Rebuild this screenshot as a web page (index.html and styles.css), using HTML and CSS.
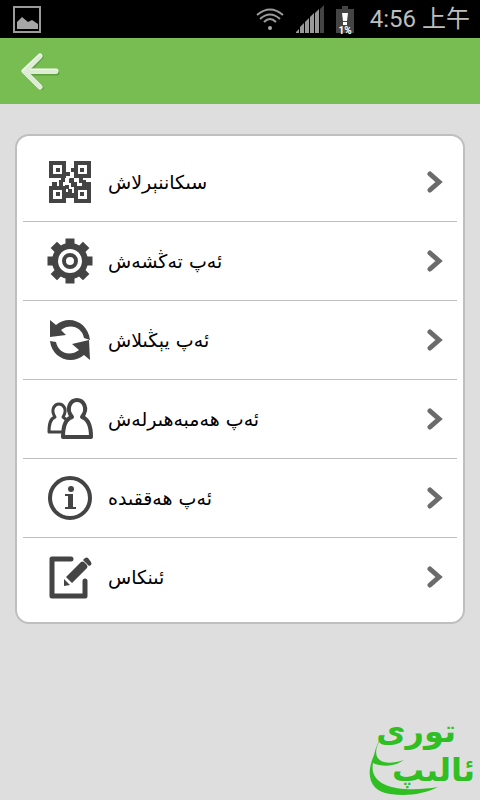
FILE: index.html
```html
<!DOCTYPE html>
<html lang="ug">
<head>
    <meta charset="UTF-8">
    <meta name="viewport" content="width=device-width, initial-scale=1.0">
    <title>ئالىپ تورى</title>
    <link rel="stylesheet" href="styles.css">
</head>
<body>
    <div class="status-bar">
        <svg class="picture" width="28" height="27" viewBox="0 0 28 27">
            <rect x="1" y="1" width="26" height="25" fill="none" stroke="#9b9b9b" stroke-width="2"/>
            <path d="M4 23v-7l5-5 6 5 4-2 6 4v5z" fill="#a6a6a6"/>
        </svg>
        <div class="status-icons">
            <svg width="28" height="23" viewBox="0 0 28 23" fill="none" stroke="#9b9b9b" stroke-width="2">
                <path d="M1 7Q14-4 27 7M4 11Q14 2 24 11M8 14Q14 8 20 14"/>
                <circle cx="14" cy="20" r="2" fill="#aaa" stroke="none"/>
            </svg>
            <svg width="28" height="28" viewBox="0 0 28 28" fill="#999">
                <path d="M0 28v-1l3-3v4zM4 28v-6l4-4v10zM9 28V17l4-4v15zM14 28V12l4-4v20zM19 28V8l4-4v24z"/>
                <path d="M24 28V4l4-4v28z" fill="#444"/>
            </svg>
            <svg width="18" height="36" viewBox="0 0 18 36">
                <path d="M0 8h6V5h6v3h6v24H0z" fill="#444"/>
                <path d="M6 12h6l-1 8H7zM7 21h4v3H7z" fill="#fff"/>
                <text class="percent" x="9" y="33">1%</text>
            </svg>
            <span class="clock">4:56 上午</span>
        </div>
    </div>

    <header class="top-bar">
        <button class="back" type="button" aria-label="Back">
            <svg width="40" height="38" viewBox="0 0 40 38" fill="none" stroke-width="5" stroke-linecap="round" stroke-linejoin="round">
                <path d="M21 5L6 21l15 15M7 21h30" stroke="#4d8a32" opacity=".6"/>
                <path d="M20 4L4 19l16 16M5 19h31" stroke="#f2f9ee"/>
                <path d="M20 5L5 20l15 15M6 20h30" stroke="#dcedd3" stroke-width="4"/>
            </svg>
        </button>
    </header>

    <nav class="menu">
        <a class="item" href="#">
            <svg class="icon" viewBox="0 0 46 46" fill="#444">
                <path fill-rule="evenodd" d="M2 2h17v17H2zM6 6v9h9V6zM27 2h17v17H27zM31 6v9h9V6zM2 27h17v17H2zM6 31v9h9v-9zM27 27h17v17H27zM31 31v9h9v-9z"/>
                <path d="M9 9h4v4H9zM33 9h4v4h-4zM9 33h4v4H9zM33 33h4v4h-4zM24 9h4v4h-4zM19 13h4v4h-4zM14 18h4v5h-2v4h-4v-6h2zM5 23h5v5H5zM23 19h4v4h3v5h-6v-4h-2v-4zM32 19h4v2h3v2h5v5h-9v-4h-3zM18 26h4v4h-4zM21 30h4v4h4v5H19v-6h2z"/>
            </svg>
            <span class="label" dir="rtl">سىكاننېرلاش</span>
            <svg class="arrow" viewBox="0 0 16 22"><path d="M3 3l9 8-9 8"/></svg>
        </a>
        <a class="item" href="#">
            <svg class="icon" viewBox="0 0 46 46">
                <path d="M23 5v36M5 23h36M10 10l26 26M36 10L10 36" stroke="#444" stroke-width="9" stroke-linecap="square"/>
                <circle cx="23" cy="23" r="18" fill="#444"/>
                <circle cx="23" cy="23" r="12" fill="#fff"/>
                <circle cx="23" cy="23" r="6" fill="#fff" stroke="#444" stroke-width="4"/>
            </svg>
            <span class="label" dir="rtl">ئەپ تەڭشەش</span>
            <svg class="arrow" viewBox="0 0 16 22"><path d="M3 3l9 8-9 8"/></svg>
        </a>
        <a class="item" href="#">
            <svg class="icon" viewBox="0 0 46 46" fill="#444">
                <path d="M3 3l6 5C22-3 41 5 43 23l-6-2C35 10 23 6 14 13l5 5-16 2z"/>
                <path d="M43 43l-6-5C24 49 5 41 3 24l6 1c2 11 14 15 23 8l-7-6 17-4z"/>
            </svg>
            <span class="label" dir="rtl">ئەپ يېڭىلاش</span>
            <svg class="arrow" viewBox="0 0 16 22"><path d="M3 3l9 8-9 8"/></svg>
        </a>
        <a class="item" href="#">
            <svg class="icon" viewBox="0 0 46 46" fill="#fff" stroke="#444" stroke-width="4" stroke-linejoin="round">
                <path d="M8 21C3 13 8 8 12 8s9 5 4 13l5 4v11H2c0-8 1-13 6-15z" stroke-width="3"/>
                <path d="M25 21c-7-9-1-17 5-17s12 8 5 17c6 2 9 9 9 20H16c0-11 2-18 9-20z"/>
            </svg>
            <span class="label" dir="rtl">ئەپ ھەمبەھىرلەش</span>
            <svg class="arrow" viewBox="0 0 16 22"><path d="M3 3l9 8-9 8"/></svg>
        </a>
        <a class="item" href="#">
            <svg class="icon" viewBox="0 0 46 46" fill="#444">
                <circle cx="23" cy="23" r="20" fill="none" stroke="#444" stroke-width="4"/>
                <circle cx="24" cy="14" r="3"/>
                <path d="M18 19h8v13h3v2H18v-2h3V21h-3z"/>
            </svg>
            <span class="label" dir="rtl">ئەپ ھەققىدە</span>
            <svg class="arrow" viewBox="0 0 16 22"><path d="M3 3l9 8-9 8"/></svg>
        </a>
        <a class="item" href="#">
            <svg class="icon" viewBox="0 0 46 46" fill="#444">
                <path d="M24 5H5v37h33V27" fill="none" stroke="#444" stroke-width="5" stroke-linecap="round" stroke-linejoin="round"/>
                <path d="M17 25l6 6-6 1zM19 23L34 8q2-1 3 0l3 3q1 2 0 3L25 29zM36 6l2-2q2-1 3 0l3 4q1 2 0 3l-2 1z"/>
            </svg>
            <span class="label" dir="rtl">ئىنكاس</span>
            <svg class="arrow" viewBox="0 0 16 22"><path d="M3 3l9 8-9 8"/></svg>
        </a>
    </nav>

    <footer class="footer">
        <svg class="logo" viewBox="0 0 110 90" role="img" aria-label="ئالىپ تورى">
            <path class="swash" d="M17 22C-2 48 12 58 36 50C26 57 14 57 5 53C0 80 40 82 70 77C54 85 38 86 22 84C2 81-3 66 6 45Q9 31 17 22z"/>
            <text class="word" x="88" y="32">تورى</text>
            <text class="word" x="107" y="71">ئالىپ</text>
        </svg>
    </footer>
</body>
</html>
```
FILE: styles.css
```css
body {
    margin: 0;
    min-height: 100vh;
    display: flex;
    flex-direction: column;
    background-color: #dedede;
    font-family: "DejaVu Sans", sans-serif;
}
svg {
    display: block;
    flex: none;
}
.status-bar {
    display: flex;
    align-items: center;
    justify-content: space-between;
    height: 38px;
    padding: 0 10px 0 13px;
    background-color: #000;
}
.status-icons {
    display: flex;
    align-items: center;
    gap: 12px;
}
.clock {
    margin-left: 4px;
    font-family: Roboto, "Noto Sans CJK SC", sans-serif;
    font-size: 24px;
    line-height: 36px;
    color: #bebebe;
    white-space: nowrap;
}
.percent {
    font-family: Roboto, sans-serif;
    font-size: 10px;
    font-weight: bold;
    text-anchor: middle;
    fill: #fff;
}
.top-bar {
    display: flex;
    align-items: center;
    height: 66px;
    padding: 0 20px;
    background-color: #78bd52;
}
.back {
    padding: 0;
    border: none;
    background: none;
    cursor: pointer;
}
.menu {
    margin: 30px 15px 0;
    padding: 7px 6px 5px;
    border: 2px solid #bfbfbf;
    border-radius: 14px;
    background-color: #fff;
}
.item {
    display: flex;
    align-items: center;
    box-sizing: border-box;
    height: 79px;
    padding: 0 14px 0 24px;
    border-bottom: 1px solid #bfbfbf;
    color: #000;
    text-decoration: none;
}
.item:last-child {
    border-bottom-color: transparent;
}
.icon {
    width: 46px;
    height: 46px;
}
.label {
    margin-left: 15px;
    font-size: 19px;
    line-height: 30px;
}
.arrow {
    width: 16px;
    height: 22px;
    margin-left: auto;
    fill: none;
    stroke: #6b6b6b;
    stroke-width: 5px;
    stroke-linecap: round;
}
.footer {
    display: flex;
    justify-content: flex-end;
    margin-top: auto;
    padding: 0 2px;
}
.logo {
    width: 110px;
    height: 90px;
}
.word {
    direction: rtl;
    font-size: 32px;
    font-weight: bold;
    fill: #2fbf23;
}
.swash {
    fill: #2fbf23;
}
```
